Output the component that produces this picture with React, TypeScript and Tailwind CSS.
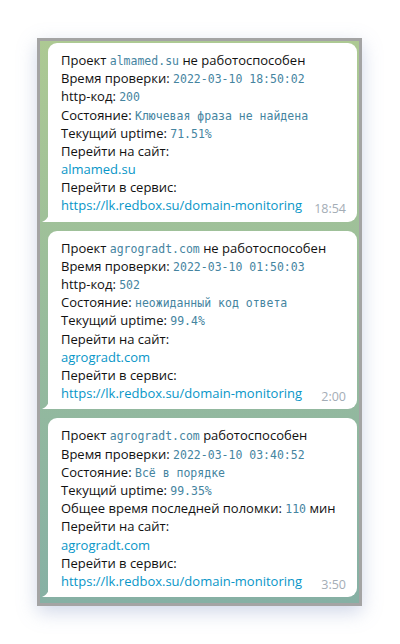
import React from "react";

type Part = { t: string; kind?: "mono" | "link" };
type Line = Part[];

const messages: { lines: Line[]; time: string }[] = [
  {
    time: "18:54",
    lines: [
      [{ t: "Проект " }, { t: "almamed.su", kind: "mono" }, { t: " не работоспособен" }],
      [{ t: "Время проверки: " }, { t: "2022-03-10 18:50:02", kind: "mono" }],
      [{ t: "http-код: " }, { t: "200", kind: "mono" }],
      [{ t: "Состояние: " }, { t: "Ключевая фраза не найдена", kind: "mono" }],
      [{ t: "Текущий uptime: " }, { t: "71.51%", kind: "mono" }],
      [{ t: "Перейти на сайт:" }],
      [{ t: "almamed.su", kind: "link" }],
      [{ t: "Перейти в сервис:" }],
    ],
  },
  {
    time: "2:00",
    lines: [
      [{ t: "Проект " }, { t: "agrogradt.com", kind: "mono" }, { t: " не работоспособен" }],
      [{ t: "Время проверки: " }, { t: "2022-03-10 01:50:03", kind: "mono" }],
      [{ t: "http-код: " }, { t: "502", kind: "mono" }],
      [{ t: "Состояние: " }, { t: "неожиданный код ответа", kind: "mono" }],
      [{ t: "Текущий uptime: " }, { t: "99.4%", kind: "mono" }],
      [{ t: "Перейти на сайт:" }],
      [{ t: "agrogradt.com", kind: "link" }],
      [{ t: "Перейти в сервис:" }],
    ],
  },
  {
    time: "3:50",
    lines: [
      [{ t: "Проект " }, { t: "agrogradt.com", kind: "mono" }, { t: " работоспособен" }],
      [{ t: "Время проверки: " }, { t: "2022-03-10 03:40:52", kind: "mono" }],
      [{ t: "Состояние: " }, { t: "Всё в порядке", kind: "mono" }],
      [{ t: "Текущий uptime: " }, { t: "99.35%", kind: "mono" }],
      [{ t: "Общее время последней поломки: " }, { t: "110", kind: "mono" }, { t: " мин" }],
      [{ t: "Перейти на сайт:" }],
      [{ t: "agrogradt.com", kind: "link" }],
      [{ t: "Перейти в сервис:" }],
    ],
  },
];

function Bubble({ lines, time }: { lines: Line[]; time: string }) {
  return (
    <div className="relative ml-[6px] rounded-[9px] rounded-bl-none bg-white pl-[13px] pr-[11px] pt-[8px] pb-[7px] text-[13px] leading-[18.2px] text-[#111]">
      {lines.map((line, i) => (
        <div key={i} className="h-[18.2px] whitespace-nowrap">
          {line.map((p, j) =>
            p.kind === "mono" ? (
              <span key={j} className="font-['DejaVu_Sans_Mono',monospace] text-[11.5px] leading-none text-[#45849f]">
                {p.t}
              </span>
            ) : p.kind === "link" ? (
              <span key={j} className="text-[#0896c8]">
                {p.t}
              </span>
            ) : (
              <span key={j}>{p.t}</span>
            )
          )}
        </div>
      ))}
      <div className="flex h-[18.2px] items-end justify-between">
        <span className="text-[#0896c8]">https://lk.redbox.su/domain-monitoring</span>
        <span className="translate-y-[4px] text-[12.5px] text-[#a4adb6]">{time}</span>
      </div>
      <svg className="absolute bottom-0 left-[-6px]" width="7" height="10" viewBox="0 0 7 10">
        <path d="M7 0 C7 5 4 8.5 0 10 L7 10 Z" fill="#fff" />
      </svg>
    </div>
  );
}

export default function App() {
  return (
    <div className="h-[644px] w-[400px] bg-white pl-[37px] pt-[38px] font-['Open_Sans',sans-serif]">
      <div className="h-[568px] w-[325px] border-[3px] border-[#a4a4a4] bg-gradient-to-b from-[#adc993] via-[#98bc9c] to-[#86b0a4] shadow-[0_6px_18px_rgba(120,140,190,0.35)]">
        <div className="flex flex-col gap-[9px] pl-[2px] pr-[2px] pt-[2px]">
          {messages.map((m, i) => (
            <Bubble key={i} lines={m.lines} time={m.time} />
          ))}
        </div>
      </div>
    </div>
  );
}
